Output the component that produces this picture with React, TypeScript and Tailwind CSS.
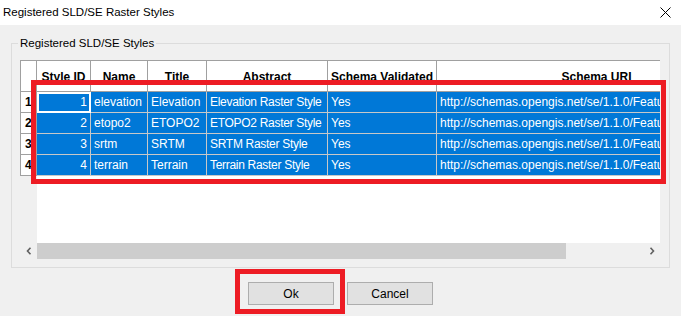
const columns = [
  { key: "id", label: "Style ID", width: "w-[54px]" },
  { key: "name", label: "Name", width: "w-[57px]" },
  { key: "title", label: "Title", width: "w-[59px]" },
  { key: "abstract", label: "Abstract", width: "w-[121px]" },
  { key: "validated", label: "Schema Validated", width: "w-[109px]" },
  { key: "uri", label: "Schema URI", width: "w-[320px]" },
];

const uri = "http://schemas.opengis.net/se/1.1.0/FeatureStyle.xsd";

const rows = [
  { id: "1", name: "elevation", title: "Elevation", abstract: "Elevation Raster Style", validated: "Yes", uri },
  { id: "2", name: "etopo2", title: "ETOPO2", abstract: "ETOPO2 Raster Style", validated: "Yes", uri },
  { id: "3", name: "srtm", title: "SRTM", abstract: "SRTM Raster Style", validated: "Yes", uri },
  { id: "4", name: "terrain", title: "Terrain", abstract: "Terrain Raster Style", validated: "Yes", uri },
];

function Chevron({ dir }: { dir: "left" | "right" }) {
  return (
    <svg width="6" height="8" viewBox="0 0 6 8">
      <path
        d={dir === "left" ? "M4.5 0.8 L1.5 4 L4.5 7.2" : "M1.5 0.8 L4.5 4 L1.5 7.2"}
        fill="none"
        stroke="#606060"
        strokeWidth="1.6"
      />
    </svg>
  );
}

export default function App() {
  return (
    <div
      className="w-[681px] h-[316px] bg-[#f0f0f0] text-[12px] text-black overflow-hidden relative"
      style={{ fontFamily: '"Segoe UI", "Liberation Sans", Arial, sans-serif' }}
    >
      {/* Title bar */}
      <div className="h-[25px] bg-white flex items-center justify-between pl-[3px] pr-[10px]">
        <span className="text-[11.5px] pt-[1px]">Registered SLD/SE Raster Styles</span>
        <svg width="11" height="11" viewBox="0 0 11 11">
          <path d="M0.5 0.5 L10.5 10.5 M10.5 0.5 L0.5 10.5" stroke="#000" strokeWidth="1" />
        </svg>
      </div>

      {/* Group box */}
      <div className="relative ml-[11px] mt-[18px] w-[659px] h-[225px] border border-[#dcdcdc] px-[8px] pt-[16px] pb-[8px]">
        <span className="absolute -top-[9px] left-[6px] bg-[#f0f0f0] px-[2px] leading-[16px] text-[11.5px]">
          Registered SLD/SE Styles
        </span>

        <div className="w-[640px] h-[199px] flex flex-col overflow-hidden">
          {/* Header */}
          <div className="flex h-[32px] shrink-0 bg-white border-t border-[#a0a0a0]">
            <div className="w-[17px] shrink-0 border-l border-r border-b border-[#a0a0a0]" />
            {columns.map((c) => (
              <div
                key={c.key}
                className={`${c.width} shrink-0 border-r border-b border-[#a0a0a0] flex items-center justify-center font-bold whitespace-nowrap overflow-hidden pt-[2px]`}
              >
                {c.label}
              </div>
            ))}
          </div>

          {/* Rows */}
          {rows.map((r, i) => (
            <div key={r.id} className="flex h-[21px] shrink-0">
              <div className="w-[17px] shrink-0 bg-white border-l border-r border-b border-[#a0a0a0] font-bold pl-[4px] leading-[20px]">
                {i + 1}
              </div>
              {columns.map((c) => {
                const focused = i === 0 && c.key === "id";
                return (
                  <div
                    key={c.key}
                    className={`${c.width} shrink-0 bg-[#0078d7] text-white border-r border-b border-[#c8c8c8] whitespace-nowrap overflow-hidden leading-[20px] ${
                      c.key === "id" ? "text-right pr-[3px]" : "pl-[3px]"
                    } ${c.key === "abstract" ? "tracking-[-0.3px]" : ""} ${
                      focused ? "outline-2 -outline-offset-2 outline-white" : ""
                    }`}
                  >
                    {r[c.key as keyof typeof r]}
                  </div>
                );
              })}
            </div>
          ))}

          {/* Empty viewport */}
          <div className="flex flex-1">
            <div className="w-[17px] shrink-0 bg-[#f0f0f0]" />
            <div className="flex-1 bg-white" />
          </div>

          {/* Horizontal scrollbar */}
          <div className="flex h-[16px] shrink-0 bg-[#f0f0f0]">
            <div className="w-[17px] flex items-center justify-center">
              <Chevron dir="left" />
            </div>
            <div className="w-[529px] bg-[#cdcdcd]" />
            <div className="flex-1" />
            <div className="w-[17px] flex items-center justify-center">
              <Chevron dir="right" />
            </div>
          </div>
        </div>

        {/* Annotation around selected rows */}
        <div className="absolute left-[19px] top-[36px] w-[635px] h-[104px] border-[5px] border-[#ed1c24] pointer-events-none" />
      </div>

      {/* Buttons */}
      <div className="flex justify-center gap-[13px] mt-[14px]">
        <div className="relative">
          <button className="w-[86px] h-[23px] bg-[#e1e1e1] border border-[#adadad]">Ok</button>
          <div className="absolute -left-[13px] -top-[13px] w-[110px] h-[45px] border-[5px] border-[#ed1c24] pointer-events-none" />
        </div>
        <button className="w-[86px] h-[23px] bg-[#e1e1e1] border border-[#adadad]">Cancel</button>
      </div>
    </div>
  );
}
